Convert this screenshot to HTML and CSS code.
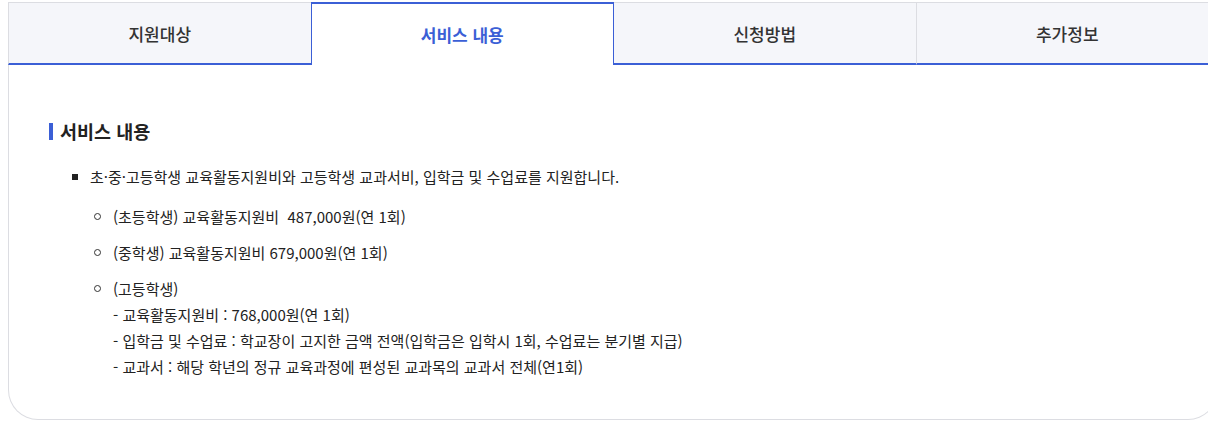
FILE: index.html
```html
<!DOCTYPE html>
<html lang="ko">
<head>
<meta charset="utf-8">
<link rel="stylesheet" href="styles.css">
</head>
<body>
<div class="wrap">
  <div class="tabs">
    <div class="tab">지원대상</div>
    <div class="tab active">서비스 내용</div>
    <div class="tab">신청방법</div>
    <div class="tab last">추가정보</div>
  </div>
  <div class="panel">
    <h3 class="title">서비스 내용</h3>
    <ul class="list">
      <li class="item">초·중·고등학생 교육활동지원비와 고등학생 교과서비, 입학금 및 수업료를 지원합니다.
        <ul class="sub">
          <li class="sub-item">(초등학생) 교육활동지원비&nbsp; 487,000원(연 1회)</li>
          <li class="sub-item">(중학생) 교육활동지원비 679,000원(연 1회)</li>
          <li class="sub-item">(고등학생)<br>- 교육활동지원비 : 768,000원(연 1회)<br>- 입학금 및 수업료 : 학교장이 고지한 금액 전액(입학금은 입학시 1회, 수업료는 분기별 지급)<br>- 교과서 : 해당 학년의 정규 교육과정에 편성된 교과목의 교과서 전체(연1회)</li>
        </ul>
      </li>
    </ul>
  </div>
</div>
</body>
</html>
```

FILE: styles.css
```css
html, body {
  margin: 0;
  padding: 0;
  background: #fff;
  overflow: hidden;
}
body {
  font-family: "Noto Sans CJK KR", "Noto Sans", sans-serif;
  color: #222;
}
.wrap {
  padding: 2px 0 0 8px;
  width: 1210px;
}
.tabs {
  display: flex;
  height: 63px;
}
.tab {
  flex: 1;
  display: flex;
  align-items: center;
  justify-content: center;
  background: #f5f6fa;
  border-top: 1px solid #dcdde2;
  border-left: 1px solid #dcdde2;
  border-bottom: 2px solid #3b5fd6;
  font-size: 17px;
  font-weight: 500;
  color: #333;
  box-sizing: border-box;
}
.tab.active {
  background: #fff;
  border: 2px solid #3b5fd6;
  border-width: 2px 1px 0 1px;
  color: #3b5fd6;
  font-weight: 700;
}
.tab.active + .tab {
  border-left: none;
}
.panel {
  border: 1px solid #dcdde2;
  border-top: none;
  border-radius: 0 0 30px 30px;
  padding: 55px 40px 40px 40px;
  height: 355px;
  box-sizing: border-box;
}
.title {
  margin: 0;
  font-size: 18.5px;
  font-weight: 700;
  color: #222;
  line-height: 22px;
  display: flex;
  align-items: center;
  gap: 7px;
}
.title::before {
  content: "";
  width: 4px;
  height: 17px;
  background: #3b5fd6;
}
.list {
  list-style: none;
  margin: 22px 0 0 0;
  padding: 0 0 0 41px;
  font-size: 15px;
  line-height: 26px;
  color: #222;
}
.item {
  position: relative;
}
.item::before {
  content: "";
  position: absolute;
  left: -18px;
  top: 10px;
  width: 6px;
  height: 6px;
  background: #222;
}
.sub {
  list-style: none;
  margin: 14px 0 0 0;
  padding: 0 0 0 23px;
}
.sub-item {
  position: relative;
  margin-bottom: 10px;
}
.sub-item::before {
  content: "";
  position: absolute;
  left: -19px;
  top: 9px;
  width: 5px;
  height: 5px;
  border: 1.5px solid #333;
  border-radius: 50%;
}
```
